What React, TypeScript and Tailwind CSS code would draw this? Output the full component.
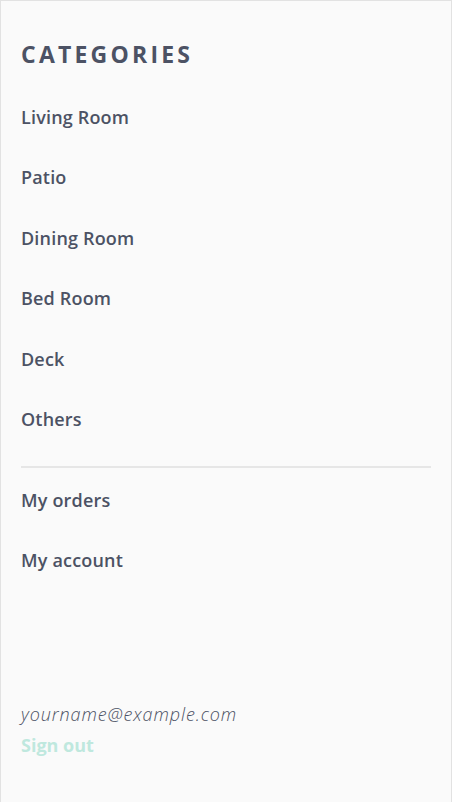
import React from 'react';

const categories = ['Living Room', 'Patio', 'Dining Room', 'Bed Room', 'Deck', 'Others'];
const accountLinks = ['My orders', 'My account'];

export default function App() {
  return (
    <div
      className="h-[803px] w-[452px] border border-[#e2e2e2] bg-[#fafafa] px-5 pt-[38px] text-[#4c5264]"
      style={{ fontFamily: '"Open Sans", Lato, sans-serif' }}
    >
      <nav className="flex h-full flex-col">
        <h2 className="text-[23px] font-bold uppercase leading-[30px] tracking-[0.14em]">Categories</h2>
        <ul className="mt-[36px] flex flex-col gap-[36.4px]">
          {categories.map((c) => (
            <li key={c} className="text-[18px] font-semibold leading-[24px] tracking-[0.01em]">
              {c}
            </li>
          ))}
        </ul>
        <hr className="mt-[35px] border-t-2 border-[#e6e6e6]" />
        <ul className="mt-[20px] flex flex-col gap-[36.4px]">
          {accountLinks.map((l) => (
            <li key={l} className="text-[18px] font-semibold leading-[24px] tracking-[0.01em]">
              {l}
            </li>
          ))}
        </ul>
        <div className="mt-auto mb-[45px] flex flex-col">
          <span className="text-[18px] font-light italic leading-[24px] tracking-[0.05em]">yourname@example.com</span>
          <a className="mt-[7px] text-[18px] font-bold leading-[24px] text-[#bfe8de]">Sign out</a>
        </div>
      </nav>
    </div>
  );
}
